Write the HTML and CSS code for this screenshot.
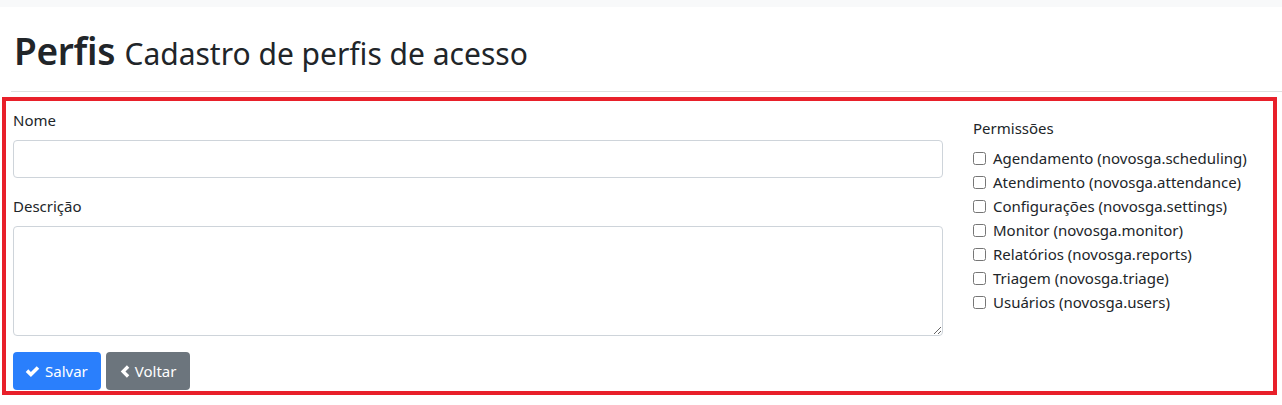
FILE: index.html
```html
<!DOCTYPE html>
<html lang="pt-BR">
<head>
<meta charset="utf-8">
<title>Perfis</title>
<link rel="stylesheet" href="styles.css">
</head>
<body>
<div class="topbar"></div>
<header class="page-header">
  <h1 class="title">Perfis <small class="subtitle">Cadastro de perfis de acesso</small></h1>
</header>
<hr class="divider">
<form class="panel">
  <div class="grid">
    <div class="main-col">
      <div class="form-group">
        <label class="label" for="nome">Nome</label>
        <input class="control" id="nome" type="text">
      </div>
      <div class="form-group">
        <label class="label" for="descricao">Descrição</label>
        <textarea class="control textarea" id="descricao"></textarea>
      </div>
      <div class="actions">
        <button type="button" class="btn btn-primary"><svg class="icon" viewBox="0 0 16 16" width="15" height="15"><path d="M0.8 8.4 L3.5 5.7 L6.3 8.5 L12.5 2.3 L15.2 5 L6.3 13.9 Z" fill="#fff"/></svg>Salvar</button>
        <button type="button" class="btn btn-secondary"><svg class="icon" viewBox="0 0 11 16" width="10" height="15"><path d="M7.6 1.2 L10.2 3.8 L6 8 L10.2 12.2 L7.6 14.8 L0.8 8 Z" fill="#fff"/></svg>Voltar</button>
      </div>
    </div>
    <div class="side-col">
      <div class="label side-label">Permissões</div>
      <label class="check"><input type="checkbox"><span>Agendamento (novosga.scheduling)</span></label>
      <label class="check"><input type="checkbox"><span>Atendimento (novosga.attendance)</span></label>
      <label class="check"><input type="checkbox"><span>Configurações (novosga.settings)</span></label>
      <label class="check"><input type="checkbox"><span>Monitor (novosga.monitor)</span></label>
      <label class="check"><input type="checkbox"><span>Relatórios (novosga.reports)</span></label>
      <label class="check"><input type="checkbox"><span>Triagem (novosga.triage)</span></label>
      <label class="check"><input type="checkbox"><span>Usuários (novosga.users)</span></label>
    </div>
  </div>
</form>
</body>
</html>
```
FILE: styles.css
```css
* { box-sizing: border-box; }
html, body { margin: 0; padding: 0; background: #fff; }
body {
  font-family: "Noto Sans", "Open Sans", sans-serif;
  font-size: 15px;
  line-height: 24px;
  color: #212529;
  width: 1282px;
  height: 405px;
  overflow: hidden;
}
.topbar { height: 7px; background: #f8f9fa; }
.page-header { padding: 20px 0 0 14px; }
.title {
  margin: 0;
  font-size: 37px;
  line-height: 48px;
  font-weight: 600;
  letter-spacing: -0.3px;
}
.subtitle {
  font-size: 30px;
  font-weight: 400;
  letter-spacing: 0;
}
.divider {
  margin: 13px 0 0 11px;
  border: 0;
  border-top: 1px solid #e0e0e0;
  height: 0;
}
.panel {
  margin: 5px 0 0 2px;
  width: 1275px;
  height: 298px;
  border: 4px solid #e8202a;
  padding: 7px 0 0 7px;
}
.grid {
  display: grid;
  grid-template-columns: 930px 1fr;
  column-gap: 30px;
}
.form-group { margin-bottom: 16px; }
.label { display: block; margin-bottom: 8px; }
.control {
  display: block;
  width: 100%;
  height: 38px;
  border: 1px solid #ced4da;
  border-radius: 4px;
  background: #fff;
  font: inherit;
  padding: 6px 12px;
}
.textarea { height: 110px; resize: vertical; }
.actions { display: flex; gap: 5px; }
.btn {
  display: inline-flex;
  align-items: center;
  gap: 5px;
  height: 38px;
  padding: 0 13px 0 12px;
  border: 0;
  border-radius: 4px;
  color: #fff;
  font: inherit;
  cursor: pointer;
}
.btn-primary { background: #2a7ffc; }
.btn-secondary { background: #6c757d; padding: 0 14px 0 14px; }
.icon { display: block; }
.side-col { padding-top: 8px; }
.side-label { margin-bottom: 6px; }
.check {
  display: flex;
  align-items: center;
  height: 24px;
}
.check input {
  width: 13px;
  height: 13px;
  margin: 0 7px 0 0;
}
```
